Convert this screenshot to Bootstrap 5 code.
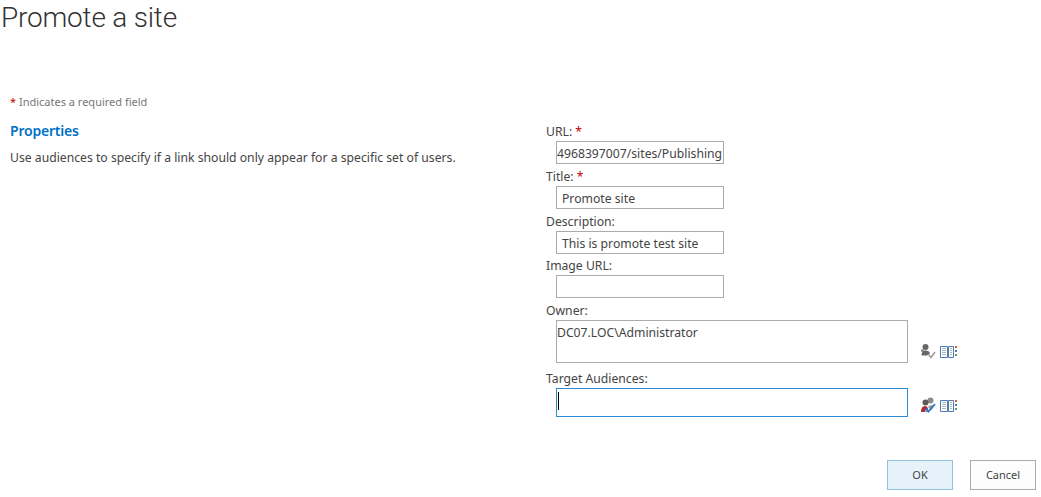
<!DOCTYPE html>
<html>
<head>
<meta charset="utf-8">
<title>Promote a site</title>
<link href="https://cdn.jsdelivr.net/npm/bootstrap@5.3.1/dist/css/bootstrap.min.css" rel="stylesheet">
<style>
body { font-family: "Noto Sans", "Open Sans", sans-serif; font-size: 12.2px; color: #444; background: #fff; overflow: hidden; }
.page-title { font-family: Roboto, sans-serif; font-weight: 300; font-size: 28px; letter-spacing: -0.2px; line-height: 35px; height: 36px; margin: 0; padding-left: 1px; color: #333; }
.req-note { margin: 57px 0 0 10px; height: 18px; line-height: 18px; font-size: 11px; color: #777; }
.req-star { color: #bf0000; }
.form-wrap { margin-top: 10px; }
.side-col { width: 546px; padding-left: 10px; }
.side-head { font-size: 14px; font-weight: 600; color: #0072c6; line-height: 20px; margin: 0 0 8px 0; letter-spacing: -0.2px; }
.side-text { font-size: 12.2px; line-height: 18px; margin: 0; }
.field-col { width: 495px; }
.fld-label { display: block; height: 20px; line-height: 22px; margin: 0; font-size: 12.2px; color: #444; }
.form-control.fld-input { width: 168px; height: 23px; min-height: 0; margin-left: 10px; padding: 1px 5px 0; border: 1px solid #ababab; border-radius: 0; font-size: 12.2px; line-height: 21px; color: #444; box-shadow: none; }
.form-control.fld-url { padding-left: 0; padding-right: 0; overflow: hidden; white-space: nowrap; }
.fld-row { margin-bottom: 2px; }
.fld-row-tight { margin-bottom: 1px; }
.fld-row-wide { margin-bottom: 5px; }
.people-row { display: flex; align-items: flex-end; margin-left: 10px; }
.people-box { width: 352px; border: 1px solid #ababab; padding: 3px 0 0 0; font-size: 12.2px; line-height: 18px; color: #444; }
.people-owner { height: 43px; }
.people-target { height: 29px; border-color: #2a8dd4; padding: 3px 0 0 1px; }
.caret-bar { display: block; width: 1px; height: 18px; background: #000; }
.people-icons { display: flex; gap: 4px; margin: 0 0 4px 12px; }
.foot-bar { margin-top: 41px; padding-right: 5px; gap: 17px; }
.btn.act-btn { width: 66px; height: 30px; padding: 0; border: 1px solid #ababab; border-radius: 0; background: #fdfdfd; font-size: 11px; color: #444; }
.btn.act-ok { background: #e6f2fa; border-color: #92c0e0; }
</style>
</head>
<body>
<h1 class="page-title">Promote a site</h1>
<div class="req-note"><span class="req-star">*</span> Indicates a required field</div>
<div class="d-flex form-wrap">
  <div class="side-col">
    <h2 class="side-head">Properties</h2>
    <p class="side-text">Use audiences to specify if a link should only appear for a specific set of users.</p>
  </div>
  <form class="field-col">
    <div class="fld-row">
      <label class="fld-label">URL: <span class="req-star">*</span></label>
      <input class="form-control fld-input fld-url" type="text" value="4968397007/sites/Publishing">
    </div>
    <div class="fld-row">
      <label class="fld-label">Title: <span class="req-star">*</span></label>
      <input class="form-control fld-input" type="text" value="Promote site">
    </div>
    <div class="fld-row-tight">
      <label class="fld-label">Description:</label>
      <input class="form-control fld-input" type="text" value="This is promote test site">
    </div>
    <div class="fld-row">
      <label class="fld-label">Image URL:</label>
      <input class="form-control fld-input" type="text">
    </div>
    <div class="fld-row-wide">
      <label class="fld-label">Owner:</label>
      <div class="people-row">
        <div class="people-box people-owner">DC07.LOC\Administrator</div>
        <div class="people-icons">
          <svg width="16" height="16" viewBox="0 0 16 16"><circle cx="5.500" cy="4" r="3" fill="#666"/><circle cx="2.500" cy="7.500" r="1.500" fill="#8a8a8a"/><path d="M1.500 12.500c0-3.500 1.500-5 4-5s4 1 4.500 3l-3 2z" fill="#666"/><path d="M8.500 11.500l2.500 3 4-5.500" fill="none" stroke="#999" stroke-width="1.400"/></svg>
          <svg width="17" height="16" viewBox="0 0 17 16"><path d="M.5 3.500h7v11h-7zM8.500 3.500h5v11h-5z" fill="#fff" stroke="#4a7db5"/><path d="M2 5.500h4M2 7.500h4M2 9.500h4M2 11.500h4M10 5.500h2M10 7.500h2M10 9.500h2M10 11.500h2" stroke="#b5b5b5"/><path d="M15 3h2v2h-2z" fill="#e0592a"/><path d="M15 7h2v2h-2z" fill="#3f7fc4"/><path d="M15 11h2v2h-2z" fill="#5aa088"/></svg>
        </div>
      </div>
    </div>
    <div class="fld-row">
      <label class="fld-label">Target Audiences:</label>
      <div class="people-row">
        <div class="people-box people-target"><span class="caret-bar"></span></div>
        <div class="people-icons">
          <svg width="16" height="16" viewBox="0 0 16 16"><circle cx="10.500" cy="3.500" r="3" fill="#8a8a8a"/><circle cx="5.500" cy="5.500" r="3" fill="#5a5a5a"/><path d="M8 10c1-2 5-2.500 6-.5l-3 4z" fill="#9a9a9a"/><path d="M1 15c0-4 1.500-6 4-6 1.500 0 2.500 1 3 2.500V15z" fill="#b3262e"/><path d="M5 13.500l2 1.500" stroke="#7fb8dc" stroke-width="2"/><path d="M6 11l2.500 3.500L15 7" fill="none" stroke="#2b78cc" stroke-width="1.800"/></svg>
          <svg width="17" height="16" viewBox="0 0 17 16"><path d="M.5 3.500h7v11h-7zM8.500 3.500h5v11h-5z" fill="#fff" stroke="#4a7db5"/><path d="M2 5.500h4M2 7.500h4M2 9.500h4M2 11.500h4M10 5.500h2M10 7.500h2M10 9.500h2M10 11.500h2" stroke="#b5b5b5"/><path d="M15 3h2v2h-2z" fill="#e0592a"/><path d="M15 7h2v2h-2z" fill="#3f7fc4"/><path d="M15 11h2v2h-2z" fill="#5aa088"/></svg>
        </div>
      </div>
    </div>
  </form>
</div>
<div class="d-flex justify-content-end foot-bar">
  <button type="button" class="btn act-btn act-ok">OK</button>
  <button type="button" class="btn act-btn">Cancel</button>
</div>
<script src="https://cdn.jsdelivr.net/npm/bootstrap@5.3.1/dist/js/bootstrap.bundle.min.js"></script>
</body>
</html>
